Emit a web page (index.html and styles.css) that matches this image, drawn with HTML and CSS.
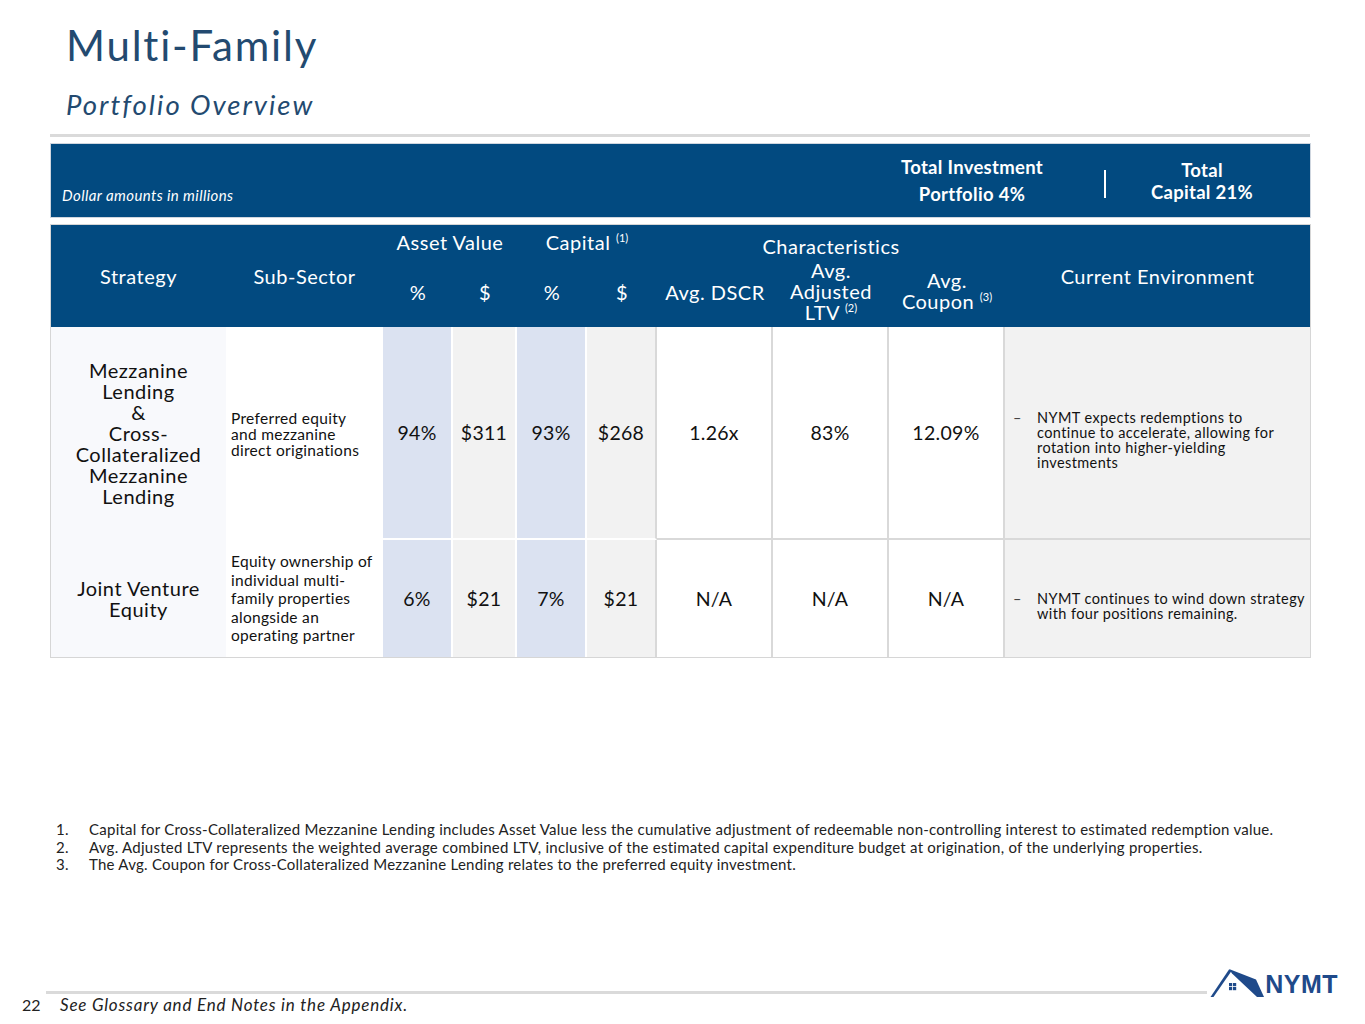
FILE: index.html
```html
<!DOCTYPE html>
<html lang="en">
<head>
<meta charset="utf-8">
<title>Multi-Family – Portfolio Overview</title>
<link rel="stylesheet" href="styles.css">
</head>
<body>
<div class="page">
  <header class="head">
    <h1 class="title">Multi-Family</h1>
    <h2 class="subtitle">Portfolio Overview</h2>
  </header>
  <div class="rule"></div>

  <section class="banner">
    <div class="banner-note">Dollar amounts in millions</div>
    <div class="banner-stat stat-a">Total Investment<br>Portfolio 4%</div>
    <div class="banner-sep"></div>
    <div class="banner-stat stat-b">Total<br>Capital 21%</div>
  </section>

  <table class="grid">
    <colgroup>
      <col class="c-strat"><col class="c-sub"><col class="c-pct"><col class="c-usd1"><col class="c-pct"><col class="c-usd2"><col class="c-char"><col class="c-char"><col class="c-char"><col class="c-env">
    </colgroup>
    <thead>
      <tr class="hr-a">
        <th rowspan="2">Strategy</th>
        <th rowspan="2">Sub-Sector</th>
        <th colspan="2">Asset Value</th>
        <th colspan="2">Capital <sup>(1)</sup></th>
        <th colspan="3" class="th-char">Characteristics</th>
        <th rowspan="2">Current Environment</th>
      </tr>
      <tr class="hr-b">
        <th>%</th>
        <th>$</th>
        <th>%</th>
        <th>$</th>
        <th>Avg. DSCR</th>
        <th class="th-stack">Avg.<br>Adjusted<br>LTV <sup>(2)</sup></th>
        <th class="th-stack">Avg.<br>Coupon <sup>(3)</sup></th>
      </tr>
    </thead>
    <tbody>
      <tr class="row-1">
        <td class="strat">Mezzanine<br>Lending<br>&amp;<br>Cross-<br>Collateralized<br>Mezzanine<br>Lending</td>
        <td class="sub sub-tight">Preferred equity<br>and mezzanine<br>direct originations</td>
        <td class="num lav">94%</td>
        <td class="num gry">$311</td>
        <td class="num lav">93%</td>
        <td class="num gry gry-end">$268</td>
        <td class="num ch">1.26x</td>
        <td class="num ch">83%</td>
        <td class="num ch">12.09%</td>
        <td class="env"><div class="env-item"><span class="dash">–</span><span>NYMT expects redemptions to<br>continue to accelerate, allowing for<br>rotation into higher-yielding<br>investments</span></div></td>
      </tr>
      <tr class="row-2">
        <td class="strat">Joint Venture<br>Equity</td>
        <td class="sub sub-loose">Equity ownership of individual multi-family properties alongside an operating partner</td>
        <td class="num lav">6%</td>
        <td class="num gry">$21</td>
        <td class="num lav">7%</td>
        <td class="num gry gry-end">$21</td>
        <td class="num ch">N/A</td>
        <td class="num ch">N/A</td>
        <td class="num ch">N/A</td>
        <td class="env"><div class="env-item"><span class="dash">–</span><span>NYMT continues to wind down strategy with four positions remaining.</span></div></td>
      </tr>
    </tbody>
  </table>

  <ol class="notes">
    <li><span class="n">1.</span><span>Capital for Cross-Collateralized Mezzanine Lending includes Asset Value less the cumulative adjustment of redeemable non-controlling interest to estimated redemption value.</span></li>
    <li><span class="n">2.</span><span>Avg. Adjusted LTV represents the weighted average combined LTV, inclusive of the estimated capital expenditure budget at origination, of the underlying properties.</span></li>
    <li><span class="n">3.</span><span>The Avg. Coupon for Cross-Collateralized Mezzanine Lending relates to the preferred equity investment.</span></li>
  </ol>

  <footer class="footer">
    <div class="foot-top">
      <div class="foot-rule"></div>
      <div class="logo">
        <svg class="roof" width="58" height="31" viewBox="0 0 58 31" aria-hidden="true">
          <polygon points="22,2.5 24.5,4 6.5,30 3.5,30" fill="#1f4a8a"/>
          <polygon points="22,2 49,12.5 57,30 50,30 25,6.5" fill="#1f4a8a"/>
          <rect x="22" y="16" width="3.2" height="3.2" fill="#1f4a8a"/>
          <rect x="26" y="16" width="3.2" height="3.2" fill="#1f4a8a"/>
          <rect x="22" y="20" width="3.2" height="3.2" fill="#1f4a8a"/>
          <rect x="26" y="20" width="3.2" height="3.2" fill="#1f4a8a"/>
        </svg>
        <span class="logo-text">NYMT</span>
      </div>
    </div>
    <div class="foot-bottom">
      <span class="pagenum">22</span>
      <span class="foot-note">See Glossary and End Notes in the Appendix.</span>
    </div>
  </footer>
</div>
</body>
</html>
```

FILE: styles.css
```css
* { box-sizing: border-box; }
html, body { margin: 0; padding: 0; background: #ffffff; }
body {
  font-family: "Lato", "Noto Sans", "Liberation Sans", sans-serif;
  color: #1b1b1b;
}
.page {
  width: 1365px;
  height: 1024px;
  display: flex;
  flex-direction: column;
  overflow: hidden;
}
.head { padding: 20px 0 0 66px; }
.title {
  margin: 0;
  font-weight: 400;
  font-size: 42px;
  line-height: 50px;
  letter-spacing: 1.8px;
  color: #234a70;
}
.subtitle {
  margin: 19px 0 0 0;
  font-weight: 400;
  font-style: italic;
  font-size: 27.5px;
  line-height: 32px;
  letter-spacing: 2px;
  color: #234a70;
}
.rule {
  margin: 13px 55px 0 50px;
  height: 3px;
  background: #dadada;
}

/* banner */
.banner {
  margin: 6px 54px 0 50px;
  height: 75px;
  background: #024a80;
  border: 1px solid #cfd6df;
  display: flex;
  align-items: center;
  color: #ffffff;
}
.banner-note {
  align-self: flex-end;
  padding: 0 0 13px 11px;
  font-style: italic;
  font-size: 15px;
  letter-spacing: 0.4px;
  flex: 1;
}
.banner-stat {
  text-align: center;
  font-weight: 700;
  font-size: 18.5px;
  letter-spacing: 0.3px;
}
.stat-a { width: 200px; line-height: 27px; margin-right: 32px; }
.banner-sep { width: 2px; height: 28px; background: #ffffff; margin-top: 6px; }
.stat-b { width: 192px; line-height: 22px; margin-right: 12px; }

/* table */
.grid {
  margin: 6px 54px 0 50px;
  width: 1261px;
  table-layout: fixed;
  border-collapse: separate;
  border-spacing: 0;
  border: 1px solid #d6d6d6;
}
.c-strat { width: 175px; }
.c-sub { width: 157px; }
.c-pct { width: 70px; }
.c-usd1 { width: 64px; }
.c-usd2 { width: 70px; }
.c-char { width: 116px; }
.c-env { width: 305px; }

.grid thead th {
  background: #024a80;
  color: #ffffff;
  font-weight: 400;
  font-size: 20px;
  letter-spacing: 0.5px;
  text-align: center;
  padding: 0;
}
.grid sup { font-size: 11px; letter-spacing: 0; vertical-align: 0; position: relative; top: -8px; }
.hr-a th { height: 33px; padding-top: 2px; }
.hr-a .th-char { padding-top: 8px; }
.hr-b th { height: 69px; line-height: 21px; }

.grid td { padding: 0; vertical-align: middle; }
.row-1 td { height: 213px; }
.row-2 td { height: 117px; }

.strat {
  background: #f8f9fc;
  text-align: center;
  font-size: 20px;
  line-height: 21px;
  letter-spacing: 0.5px;
  color: #111;
}
.sub {
  background: #ffffff;
  padding: 0 3px 0 5px !important;
  font-size: 15.5px;
  letter-spacing: 0.3px;
  color: #111;
}
.sub-tight { line-height: 16px; }
.sub-loose { line-height: 18.5px; }

.num { text-align: center; font-size: 19.5px; letter-spacing: 0.3px; color: #111; }
.lav { background: #dbe2f1; border-right: 2px solid #ffffff; }
.gry { background: #f2f2f2; border-right: 2px solid #ffffff; }
.gry-end { border-right: 2px solid #d9d9d9; }
.ch { background: #ffffff; border-right: 2px solid #d9d9d9; }
.row-1 .lav, .row-1 .gry { border-bottom: 2px solid #ffffff; }
.row-1 .ch, .row-1 .env { border-bottom: 2px solid #d9d9d9; }

.env {
  background: #f2f2f2;
  padding: 15px 0 0 8px !important;
  font-size: 14.5px;
  line-height: 15px;
  letter-spacing: 0.4px;
  color: #111;
}
.env-item { display: flex; }
.dash { flex: 0 0 24px; color: #444; }

/* notes */
.notes {
  list-style: none;
  margin: 163px 0 0 56px;
  padding: 0;
  font-size: 15px;
  line-height: 17.5px;
  letter-spacing: 0.25px;
  color: #222;
}
.notes li { display: flex; }
.notes .n { flex: 0 0 33px; }

/* footer */
.footer { margin-top: auto; padding-bottom: 10px; }
.foot-top {
  display: flex;
  align-items: flex-end;
  margin-left: 46px;
  padding-right: 27px;
}
.foot-rule {
  flex: 1;
  height: 3px;
  background: #dadada;
  margin-bottom: 4px;
}
.logo {
  display: flex;
  align-items: flex-end;
  margin-left: 0;
}
.roof { display: block; }
.logo-text {
  font-family: "Liberation Sans", "Arial", sans-serif;
  font-weight: 700;
  font-size: 25px;
  line-height: 22px;
  letter-spacing: 0.5px;
  color: #1f4a8a;
  margin-left: 0;
  margin-bottom: 3px;
}
.foot-bottom {
  display: flex;
  align-items: baseline;
  padding-left: 22px;
  margin-top: -2px;
  line-height: 18px;
}
.pagenum { width: 38px; font-size: 16px; color: #222; }
.foot-note { font-style: italic; font-size: 17px; letter-spacing: 0.8px; color: #222; }
```
